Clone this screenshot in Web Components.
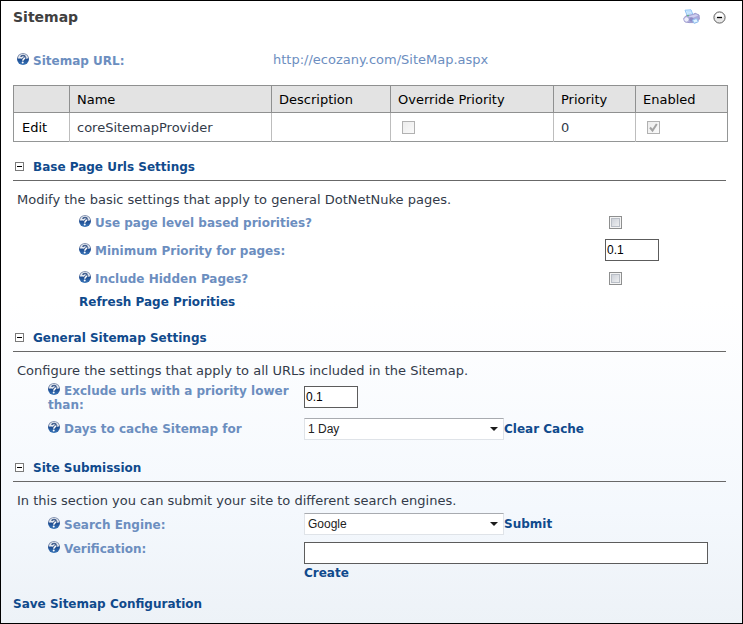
<!DOCTYPE html>
<html lang="en">
<head>
<meta charset="utf-8">
<title>Sitemap</title>
<style>
  html { height: 100%; }
  body {
    margin: 0;
    min-height: 100%;
    display: flex;
    font: 13px/18px "DejaVu Sans", sans-serif;
    color: #333b4a;
  }
</style>
</head>
<body>
<sitemap-page></sitemap-page>

<script>
const define = (name, markup) => {
  const template = document.createElement('template');
  template.innerHTML = markup;
  customElements.define(name, class extends HTMLElement {
    constructor() {
      super();
      this.attachShadow({ mode: 'open' }).append(template.content.cloneNode(true));
    }
  });
};

define('help-icon', `
  <style>
    :host { display: inline-block; width: 12px; height: 12px; margin-right: 4px; }
    svg { display: block; }
  </style>
  <svg width="12" height="12" viewBox="0 0 12 12" aria-hidden="true">
    <defs><linearGradient id="g" x1="0" y1="0" x2="0" y2="1">
      <stop offset="0" stop-color="#8a98b4"/><stop offset=".4" stop-color="#5c7099"/>
      <stop offset=".5" stop-color="#1c4c92"/><stop offset="1" stop-color="#3a76b8"/>
    </linearGradient></defs>
    <circle cx="6" cy="6" r="6" fill="url(#g)"/>
    <path d="M.9 5.6C1 2.500 3.200.9 6 .9s5 1.600 5.100 4.300C10 5.300 9 6 6.500 6S2 5.800.9 5.600z" fill="#f4f6fa" opacity=".9"/>
    <path d="M3.900 4C4.200 1.900 8.300 2 8 4.300" fill="none" stroke="#44608f" stroke-width="1.700"/>
    <path d="M8 4.300C7.900 5.800 5.900 5.800 5.800 7.600" fill="none" stroke="#274d88" stroke-width="3"/>
    <path d="M7.800 4.800C7.500 5.900 5.900 6 5.800 7.700" fill="none" stroke="#fff" stroke-width="1.500"/>
    <circle cx="5.700" cy="9.500" r="1" fill="#fff"/>
  </svg>`);

define('print-icon', `
  <style>:host { display: block; } svg { display: block; }</style>
  <svg width="17" height="16" viewBox="0 0 17 16" aria-hidden="true">
    <path d="M2 1.200 8 .8l2 5-5.500 1.700z" fill="#d3ecff" stroke="#8fc2f4"/>
    <path d="M3.800 3l4-.4M4.700 5l4-.5" stroke="#b6dcff"/>
    <path d="M.8 9.200 3 6.700l6.500-1 2.700-1.400 3.800 1.700.4 4-3 3.600H6L2 12.800z" fill="#aaa9db" stroke="#9c9acd"/>
    <path d="M5 7.500 10 6l3-.8 2.200 1.300-5.500 2.600z" fill="#cfcff0"/>
    <circle cx="3.500" cy="10.400" r="2.700" fill="#ededfb" stroke="#a9a7d6"/>
    <circle cx="8.500" cy="10.500" r="2.200" fill="#8d8bc6"/>
    <path d="M9.500 11 13.500 9.500l1.800 3.300-4.200 1.500z" fill="#e2f4ff" stroke="#8fbff0"/>
    <circle cx="5" cy="6.600" r=".8" fill="#4dbc72"/>
  </svg>`);

define('minimize-icon', `
  <style>:host { display: block; } svg { display: block; }</style>
  <svg width="13" height="13" viewBox="0 0 13 13" aria-hidden="true">
    <circle cx="6.500" cy="6.500" r="5.600" fill="#e8e8e8" stroke="#606060"/>
    <path d="M2.500 6A4 4 0 0 1 10.500 6z" fill="#fff"/>
    <path d="M4 6.500h5" stroke="#000" stroke-width="1.300"/>
  </svg>`);

define('drop-down', `
  <style>
    :host { display: inline-grid; width: 200px; align-items: center; }
    ::slotted(select), svg { grid-area: 1 / 1; }
    ::slotted(select) {
      appearance: none; box-sizing: border-box; width: 100%; height: 22px; margin: 0; padding: 0 18px 0 3px;
      border: 1px solid #dfe3e8; border-top-color: #a8abb0; border-radius: 0; background: #fff;
      font: 12px/18px "Liberation Sans", Arial, sans-serif; color: #222;
    }
    svg { justify-self: end; margin-right: 6px; pointer-events: none; }
  </style>
  <slot></slot>
  <svg width="8" height="4" viewBox="0 0 8 4" aria-hidden="true"><path d="M0 0h8L4 4z" fill="#1c1c1c"/></svg>`);

define('form-field', `
  <style>
    :host { display: grid; grid-template-columns: var(--columns); align-items: var(--align, center); min-height: var(--row, 28px); line-height: 14px; }
    ::slotted(label) { padding-top: var(--label-top, 0); font-size: var(--bold-size); font-weight: bold; color: #6c8ebf; }
    ::slotted(input[type="checkbox"]) {
      appearance: none; box-sizing: border-box; width: 13px; height: 13px; margin: 0 4px;
      border: 1px solid #8e8f8f; box-shadow: inset 0 0 0 1px #f4f4f4, inset 0 0 0 2px #b9bec6;
      background: linear-gradient(135deg, #c5cad3, #f6f6f6);
    }
    ::slotted(input[type="text"]) {
      box-sizing: border-box; width: 54px; height: 22px; margin: 0; padding: 0 1px;
      border: 1px solid #5c5c5c; border-radius: 0; background: #fff;
      font: 12px/18px "Liberation Sans", Arial, sans-serif; color: #000;
    }
    ::slotted(input.wide) { width: auto !important; margin: 3px 20px 0 0 !important; }
    ::slotted(div) { display: flex; align-items: center; }
  </style>
  <slot></slot>`);

define('settings-section', `
  <style>
    :host { display: block; margin-bottom: 11px; }
    header { display: flex; align-items: center; gap: 9px; box-sizing: border-box; height: 29px; margin-right: 2px; padding: 1px 0 0 2px; border-bottom: 1px solid #686868; }
    h2 { margin: 0; font-size: var(--bold-size); line-height: 18px; color: #104a8c; }
    button { display: grid; place-items: center; width: 9px; height: 9px; padding: 0; border: 1px solid #7b7b7b; border-radius: 0; background: #fff; }
    i { width: 5px; height: 1px; background: #000; }
    p { margin: 10px 0 0 4px; line-height: 17px; }
    .body { padding-left: var(--indent, 35px); }
  </style>
  <header><button type="button" aria-label="Collapse section"><i></i></button><h2><slot name="title"></slot></h2></header>
  <p><slot name="intro"></slot></p>
  <div class="body"><slot></slot></div>`);

define('provider-table', `
  <style>
    :host { display: block; }
    table { width: 100%; table-layout: fixed; border-collapse: collapse; border: 1px solid #949696; background: #fff; }
    th, td { box-sizing: border-box; padding: 1px 7px 0; text-align: left; font-weight: normal; }
    th { height: 27px; background: #e3e3e3; border: 1px solid #8f9090; color: #000; }
    td { height: 29px; border-right: 1px solid #bdbdbd; }
    td:last-child { border-right: 1px solid #949696; }
    th:first-child, td:first-child { padding-left: 8px; }
    a { color: #000; text-decoration: none; }
    input { appearance: none; box-sizing: border-box; width: 13px; height: 13px; margin: 0 4px; border: 1px solid #b1b1b1; background: linear-gradient(135deg, #ececec, #fafafa); }
    label { display: grid; justify-content: start; align-items: center; }
    label > * { grid-area: 1 / 1; }
    svg { margin-left: 4px; }
  </style>
  <table>
    <colgroup><col style="width:56px"><col style="width:202px"><col style="width:119px"><col style="width:163px"><col style="width:82px"><col></colgroup>
    <thead><tr><th></th><th scope="col">Name</th><th scope="col">Description</th><th scope="col">Override Priority</th><th scope="col">Priority</th><th scope="col">Enabled</th></tr></thead>
    <tbody><tr>
      <td><a href="#edit">Edit</a></td><td>coreSitemapProvider</td><td></td>
      <td><label><input type="checkbox" disabled aria-label="Override Priority"></label></td>
      <td>0</td>
      <td><label><input type="checkbox" checked disabled aria-label="Enabled"><svg width="13" height="13" viewBox="0 0 13 13" aria-hidden="true"><path d="M3 6.500 5.500 9.500 9.800 3" fill="none" stroke="#a3a3a3" stroke-width="2"/></svg></label></td>
    </tr></tbody>
  </table>`);

define('sitemap-page', `
  <style>
    :host {
      --bold-size: 12px;
      box-sizing: border-box; flex: 1; min-width: 0; padding: 0 14px 0 12px; border: 1px solid #000;
      background: linear-gradient(#fff 0, #fff 300px, #f4f8fd 510px, #edf2f7 100%);
    }
    .top { display: flex; align-items: center; height: 32px; padding-right: 2px; }
    h1 { flex: 1; margin: 0; font-size: 14px; line-height: 18px; color: #404040; }
    .top button { padding: 0; border: 0; background: none; margin-left: 13px; }
    a { color: #104a8c; font-size: var(--bold-size); font-weight: bold; text-decoration: none; }
    .url { --columns: 256px 1fr; margin: 13px 0 11px 4px; }
    .url a { color: #6c8ebf; font-weight: normal; font-size: 13px; line-height: 16px; }
    .base { --indent: 66px; --columns: 1fr 123px; margin-top: 10px; }
    .narrow { --columns: 256px 1fr; }
    .link { line-height: 19px; }
    .tall { --row: 36px; }
    .cache { --row: 27px; }
    .engine { --row: 30px; }
    .verify { --row: 25px; --align: start; --label-top: 2px; }
    .create { margin-left: 256px; }
    .save { padding-top: 2px; }
  </style>
  <div class="top">
    <h1>Sitemap</h1>
    <button type="button" aria-label="Print"><print-icon></print-icon></button>
    <button type="button" aria-label="Minimize"><minimize-icon></minimize-icon></button>
  </div>
  <form-field class="url"><label><help-icon></help-icon>Sitemap URL:</label><a href="http://ecozany.com/SiteMap.aspx">http://ecozany.com/SiteMap.aspx</a></form-field>
  <provider-table></provider-table>
  <settings-section class="base">
    <span slot="title">Base Page Urls Settings</span>
    <span slot="intro">Modify the basic settings that apply to general DotNetNuke pages.</span>
    <form-field><label for="levels"><help-icon></help-icon>Use page level based priorities?</label><input id="levels" type="checkbox"></form-field>
    <form-field><label for="minimum"><help-icon></help-icon>Minimum Priority for pages:</label><input id="minimum" type="text" value="0.1"></form-field>
    <form-field><label for="hidden"><help-icon></help-icon>Include Hidden Pages?</label><input id="hidden" type="checkbox"></form-field>
    <div class="link"><a href="#refresh">Refresh Page Priorities</a></div>
  </settings-section>
  <settings-section class="narrow">
    <span slot="title">General Sitemap Settings</span>
    <span slot="intro">Configure the settings that apply to all URLs included in the Sitemap.</span>
    <form-field class="tall"><label for="exclude"><help-icon></help-icon>Exclude urls with a priority lower than:</label><input id="exclude" type="text" value="0.1"></form-field>
    <form-field class="cache"><label for="days"><help-icon></help-icon>Days to cache Sitemap for</label><div><drop-down><select id="days"><option>1 Day</option></select></drop-down><a href="#clear">Clear Cache</a></div></form-field>
  </settings-section>
  <settings-section class="narrow">
    <span slot="title">Site Submission</span>
    <span slot="intro">In this section you can submit your site to different search engines.</span>
    <form-field class="engine"><label for="engine"><help-icon></help-icon>Search Engine:</label><div><drop-down><select id="engine"><option>Google</option></select></drop-down><a href="#submit">Submit</a></div></form-field>
    <form-field class="verify"><label for="verification"><help-icon></help-icon>Verification:</label><input id="verification" class="wide" type="text"></form-field>
    <div class="create"><a href="#create">Create</a></div>
  </settings-section>
  <div class="save"><a href="#save">Save Sitemap Configuration</a></div>`);
</script>
</body>
</html>
